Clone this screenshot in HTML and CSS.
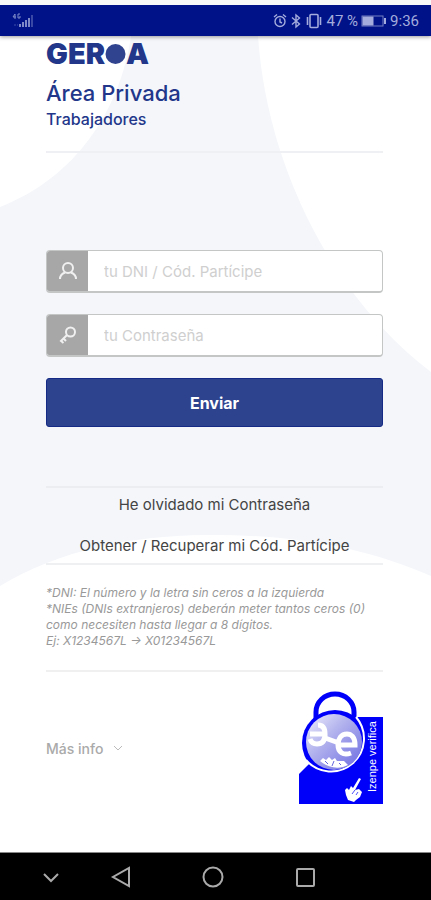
FILE: index.html
```html
<!DOCTYPE html>
<html lang="es">
<head>
    <meta charset="UTF-8">
    <meta name="viewport" content="width=device-width, initial-scale=1.0">
    <title>Geroa - Área Privada</title>
    <link rel="stylesheet" href="styles.css">
</head>
<body>
    <div class="status-bar">
        <svg class="signal" width="22" height="16" viewBox="0 0 22 16">
            <path d="M3 1 L1 4 H4 M3 1 V6 M8 1 H6 V5 H8 V3" fill="none" stroke="currentColor"/>
            <path d="M2 12 h2 M5 12 h1" stroke="currentColor" opacity=".5"/>
            <path d="M8 14 v-3 M11 14 v-5 M14 14 v-7 M17 14 v-9" stroke="currentColor" stroke-width="2"/>
            <path d="M20 14 V2" stroke="currentColor" stroke-width="2" opacity=".45"/>
        </svg>
        <div class="status-right">
            <svg width="14" height="16" viewBox="0 0 14 16" fill="none" stroke="currentColor" stroke-width="1.4">
                <circle cx="7" cy="8.500" r="5"/>
                <path d="M7 5.500 V9 L9 10 M1 4 L4 1.500 M13 4 L10 1.500"/>
            </svg>
            <svg width="12" height="16" viewBox="0 0 12 16" fill="none" stroke="currentColor" stroke-width="1.4">
                <path d="M2 4.500 L9.500 11 L6 14 V2 L9.500 5 L2 11.500"/>
            </svg>
            <svg width="18" height="16" viewBox="0 0 18 16" fill="none" stroke="currentColor" stroke-width="1.6">
                <rect x="5" y="1.500" width="8" height="13" rx="1"/>
                <path d="M2.500 4 V12 M15.500 4 V12"/>
            </svg>
            <span>47 %</span>
            <svg class="battery" width="26" height="12" viewBox="0 0 26 12" fill="none" stroke="currentColor">
                <rect x="1" y="1" width="21" height="10" opacity=".7"/>
                <rect x="2" y="2" width="10" height="8" fill="currentColor"/>
                <path d="M24 3 V9" stroke-width="2"/>
            </svg>
            <span>9:36</span>
        </div>
    </div>

    <main class="page">
        <svg class="page-bg" viewBox="0 0 431 816" preserveAspectRatio="none">
            <path d="M131 0 C120 75 75 142 0 171 V550 C60 514 130 500 205 499 C290 498 365 511 431 540 V336 C325 255 266 120 258 0 Z"/>
        </svg>

        <header class="header">
            <div class="logo">GER<svg width="21" height="20" viewBox="0 0 21 20"><circle cx="10.500" cy="10" r="10"/></svg>A</div>
            <h1>Área Privada</h1>
            <h2>Trabajadores</h2>
        </header>

        <form class="login-form">
            <div class="field">
                <label for="dni" aria-label="DNI">
                    <svg width="20" height="20" viewBox="0 0 20 20">
                        <circle cx="10" cy="7" r="5"/>
                        <path d="M2 18 C2 14.500 4.500 12.500 7 11.500 M18 18 C18 14.500 15.500 12.500 13 11.500"/>
                    </svg>
                </label>
                <input type="text" id="dni" placeholder="tu DNI / Cód. Partícipe">
            </div>
            <div class="field">
                <label for="password" aria-label="Contraseña">
                    <svg width="20" height="20" viewBox="0 0 20 20">
                        <circle cx="12.500" cy="7" r="4.500"/>
                        <path d="M9 10 L3 16 L5.500 18 M5.500 13.500 L8 16"/>
                    </svg>
                </label>
                <input type="password" id="password" placeholder="tu Contraseña">
            </div>
            <button type="submit" class="send">Enviar</button>
        </form>

        <nav class="links">
            <a href="#">He olvidado mi Contraseña</a>
            <a href="#">Obtener / Recuperar mi Cód. Partícipe</a>
        </nav>

        <p class="notes">
            *DNI: El número y la letra sin ceros a la izquierda<br>
            *NIEs (DNIs extranjeros) deberán meter tantos ceros (0) como necesiten hasta llegar a 8 dígitos.<br>
            Ej: X1234567L → X01234567L
        </p>

        <footer class="footer">
            <button type="button" class="more">Más info
                <svg width="10" height="6" viewBox="0 0 10 6"><path d="M1 1 L5 5 L9 1"/></svg>
            </button>
            <svg class="seal" width="85" height="114" viewBox="0 0 85 114">
                <defs>
                    <linearGradient id="globe" x1="0" y1="0" x2="1" y2="1">
                        <stop offset="0" stop-color="#f0f0fd"/>
                        <stop offset=".4" stop-color="#b4b4ee"/>
                        <stop offset="1" stop-color="#6a6ae2"/>
                    </linearGradient>
                </defs>
                <path d="M1 113 V83 L9 75 L60 26 H85 V113 Z" fill="#0000fa"/>
                <path d="M18 38 V21 A19 18 0 0 1 56 21 V38" fill="#fff" stroke="#0000fa" stroke-width="5"/>
                <circle cx="37" cy="52" r="33" fill="#0000fa"/>
                <path d="M58 26 A32 32 0 1 1 8 69" fill="none" stroke="#fff" stroke-width="2"/>
                <circle cx="36" cy="51" r="28" fill="url(#globe)"/>
                <!-- the two linked e's over the globe -->
                <g fill="none" stroke="#fff" stroke-width="5">
                    <path d="M12 43 H27 C27 36 24 34 20 34 M27 43 C27 50 24 53 19 53 C15 53 13 51 12 48"/>
                    <path d="M27 47 L41 52"/>
                    <path d="M40 54 H57 C57 46 53 43 49 43 C43 43 40 48 40 54 C40 61 45 65 53 62"/>
                </g>
                <path d="M22 70 L25 67 L28 69 L31 66 L34 69 L37 67 L39 70 L46 70 L50 74 C43 78 31 78 22 70 Z" fill="#fff"/>
                <path d="M27 70 L30 73 M36 70 L34 75 M41 72 L43 74" stroke="#6565dd" stroke-width="1"/>
                <!-- pointing hand -->
                <path d="M61 87 L63 88 L57 99 L61 98 L64 101 L62 106 L58 109 L56 111 L50 109 L48 104 L47 99 L49 97 L51 99 L53 95 L55 97 Z" fill="#fff"/>
                <path d="M57 99 L54 103 M60 101 L58 104" fill="none" stroke="#0000fa" stroke-width=".7"/>
                <text transform="translate(78 101) rotate(-90)">Izenpe verifica</text>
            </svg>
        </footer>
    </main>

    <div class="nav-bar">
        <button type="button" aria-label="Ocultar">
            <svg width="24" height="24" viewBox="0 0 24 24"><path d="M5 9 L12 16 L19 9"/></svg>
        </button>
        <button type="button" aria-label="Atrás">
            <svg width="24" height="24" viewBox="0 0 24 24"><path d="M20 3 V21 L4 12 Z"/></svg>
        </button>
        <button type="button" aria-label="Inicio">
            <svg width="24" height="24" viewBox="0 0 24 24"><circle cx="12" cy="12" r="9.500"/></svg>
        </button>
        <button type="button" aria-label="Recientes">
            <svg width="24" height="24" viewBox="0 0 24 24"><rect x="4" y="4" width="17" height="17" rx="1"/></svg>
        </button>
    </div>
</body>
</html>
```

FILE: styles.css
```css
* {
    box-sizing: border-box;
}
body {
    margin: 0;
    min-height: 100vh;
    display: flex;
    flex-direction: column;
    background-color: #fff;
    font-family: Inter, "Open Sans", sans-serif;
    font-size: 15px;
}
button {
    font-family: inherit;
    cursor: pointer;
}

/* status bar */
.status-bar {
    position: relative;
    z-index: 1;
    height: 36px;
    padding: 0 12px;
    border-top: 5px solid #f8f8f8;
    display: flex;
    align-items: center;
    justify-content: space-between;
    background-color: #001288;
    color: #a3acdc;
    font-family: Roboto, sans-serif;
    font-size: 15px;
    box-shadow: 0 1px 4px rgba(0, 0, 0, 0.4);
}
.signal {
    color: #7f8bc9;
}
.status-right {
    display: flex;
    align-items: center;
    gap: 3px;
}
.status-right svg {
    flex-shrink: 0;
}

/* page */
.page {
    position: relative;
    flex: 1;
    padding: 8px 48px 0 46px;
    display: flex;
    flex-direction: column;
}
.page-bg {
    position: absolute;
    top: 0;
    left: 0;
    width: 100%;
    height: 100%;
    z-index: -1;
    fill: #f4f6fa;
}
.header {
    height: 109px;
    border-bottom: 2px solid #eef0f3;
    color: #22368a;
}
.logo {
    display: flex;
    align-items: center;
    height: 20px;
    font-size: 29px;
    font-weight: 900;
    line-height: 20px;
}
.logo svg {
    fill: #2f438e;
}
h1 {
    margin: 15px 0 0;
    font-size: 22px;
    font-weight: 500;
    line-height: 28px;
}
h2 {
    margin: 0;
    font-size: 16px;
    font-weight: 500;
    line-height: 24px;
}

.login-form {
    margin-top: 97px;
    display: flex;
    flex-direction: column;
    gap: 21px;
}
.field {
    display: flex;
    height: 43px;
    border: 1px solid #c4c6c6;
    border-bottom-width: 2px;
    border-radius: 4px;
    background-color: #fff;
    overflow: hidden;
}
.field label {
    width: 41px;
    display: flex;
    align-items: center;
    justify-content: center;
    background-color: #a7a7a7;
}
.field label svg {
    fill: none;
    stroke: #f0f0f0;
    stroke-width: 2;
}
.field input {
    flex: 1;
    min-width: 0;
    padding: 0 16px;
    border: none;
    outline: none;
    background: none;
    font-family: inherit;
    font-size: 15px;
    color: #333;
}
.field input::placeholder {
    color: #cfcfcf;
}
.send {
    height: 49px;
    border: 1px solid #142a84;
    border-radius: 3px;
    background-color: #2e438e;
    color: #fff;
    font-size: 16px;
    font-weight: 700;
}

.links {
    margin-top: 59px;
    padding: 5px 0;
    border-top: 2px solid #ebedf0;
    border-bottom: 2px solid #eef0f2;
    display: flex;
    flex-direction: column;
    align-items: center;
    gap: 17px;
}
.links a {
    color: #444;
    font-size: 15px;
    line-height: 24px;
    text-decoration: none;
}

.notes {
    margin: 20px 0 0;
    padding-bottom: 21px;
    border-bottom: 2px solid #f0f0f0;
    color: #999;
    font-size: 12px;
    font-style: italic;
    line-height: 16px;
}

.footer {
    padding-top: 19px;
    display: flex;
    align-items: center;
    justify-content: space-between;
}
.more {
    padding: 0;
    border: none;
    background: none;
    display: flex;
    align-items: center;
    gap: 10px;
    color: #aaa;
    font-size: 14px;
    font-weight: 500;
}
.more svg {
    fill: none;
    stroke: #bbb;
}
.seal text {
    fill: #fff;
    font-family: "Liberation Sans", Arial, sans-serif;
    font-size: 11px;
}

/* android buttons */
.nav-bar {
    height: 48px;
    padding: 0 16px;
    border-top: 1px solid #888;
    display: grid;
    grid-template-columns: 14fr 14fr 23fr 14fr 15fr;
    align-items: center;
    background-color: #000;
}
.nav-bar button {
    padding: 0;
    border: none;
    background: none;
    display: flex;
    justify-content: center;
}
.nav-bar svg {
    fill: none;
    stroke: #aaa;
    stroke-width: 2;
}
```
